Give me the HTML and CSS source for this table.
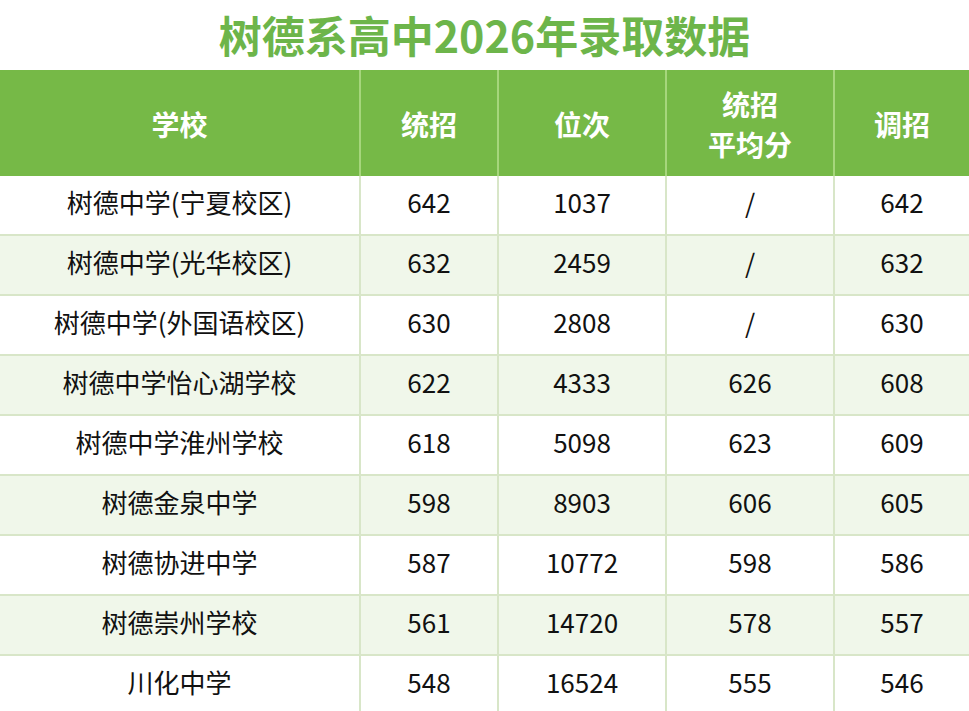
FILE: index.html
```html
<!DOCTYPE html>
<html lang="zh-CN">
<head>
<meta charset="utf-8">
<title>树德系高中2026年录取数据</title>
<link rel="stylesheet" href="styles.css">
</head>
<body>
<h1 class="title">树德系高中2026年录取数据</h1>
<table class="data">
  <colgroup>
    <col class="c1"><col class="c2"><col class="c3"><col class="c4"><col class="c5">
  </colgroup>
  <thead>
    <tr><th>学校</th><th>统招</th><th>位次</th><th>统招<br>平均分</th><th>调招</th></tr>
  </thead>
  <tbody>
    <tr><td>树德中学(宁夏校区)</td><td>642</td><td>1037</td><td>/</td><td>642</td></tr>
    <tr><td>树德中学(光华校区)</td><td>632</td><td>2459</td><td>/</td><td>632</td></tr>
    <tr><td>树德中学(外国语校区)</td><td>630</td><td>2808</td><td>/</td><td>630</td></tr>
    <tr><td>树德中学怡心湖学校</td><td>622</td><td>4333</td><td>626</td><td>608</td></tr>
    <tr><td>树德中学淮州学校</td><td>618</td><td>5098</td><td>623</td><td>609</td></tr>
    <tr><td>树德金泉中学</td><td>598</td><td>8903</td><td>606</td><td>605</td></tr>
    <tr><td>树德协进中学</td><td>587</td><td>10772</td><td>598</td><td>586</td></tr>
    <tr><td>树德崇州学校</td><td>561</td><td>14720</td><td>578</td><td>557</td></tr>
    <tr><td>川化中学</td><td>548</td><td>16524</td><td>555</td><td>546</td></tr>
  </tbody>
</table>
</body>
</html>
```
FILE: styles.css
```css
html, body {
  margin: 0;
  padding: 0;
  background: #ffffff;
  overflow: hidden;
}
body {
  width: 969px;
  height: 711px;
  font-family: "Noto Sans CJK SC", "Noto Sans", sans-serif;
}
.title {
  margin: 0;
  height: 70px;
  line-height: 68px;
  text-align: center;
  font-size: 43px;
  font-weight: 700;
  color: #6db54a;
}
.data {
  width: 969px;
  border-collapse: collapse;
  table-layout: fixed;
}
.c1 { width: 360px; }
.c2 { width: 138px; }
.c3 { width: 168px; }
.c4 { width: 168px; }
.c5 { width: 135px; }
.data th {
  height: 105px;
  padding: 0;
  background: #76b947;
  color: #ffffff;
  font-size: 28px;
  font-weight: 700;
  line-height: 40px;
  border-left: 2px solid #a6d67c;
  border-top: 1px solid #76b947;
}
.data th:first-child { border-left: none; }
.data td {
  height: 52px;
  padding: 0 0 6px;
  text-align: center;
  font-size: 26px;
  line-height: 32px;
  color: #111111;
  border: 2px solid #d8e6c8;
  border-top: none;
}
.data td:first-child { border-left: none; }
.data td:last-child { border-right: none; }
.data tbody tr:nth-child(even) td { background: #f0f7ea; }
```
